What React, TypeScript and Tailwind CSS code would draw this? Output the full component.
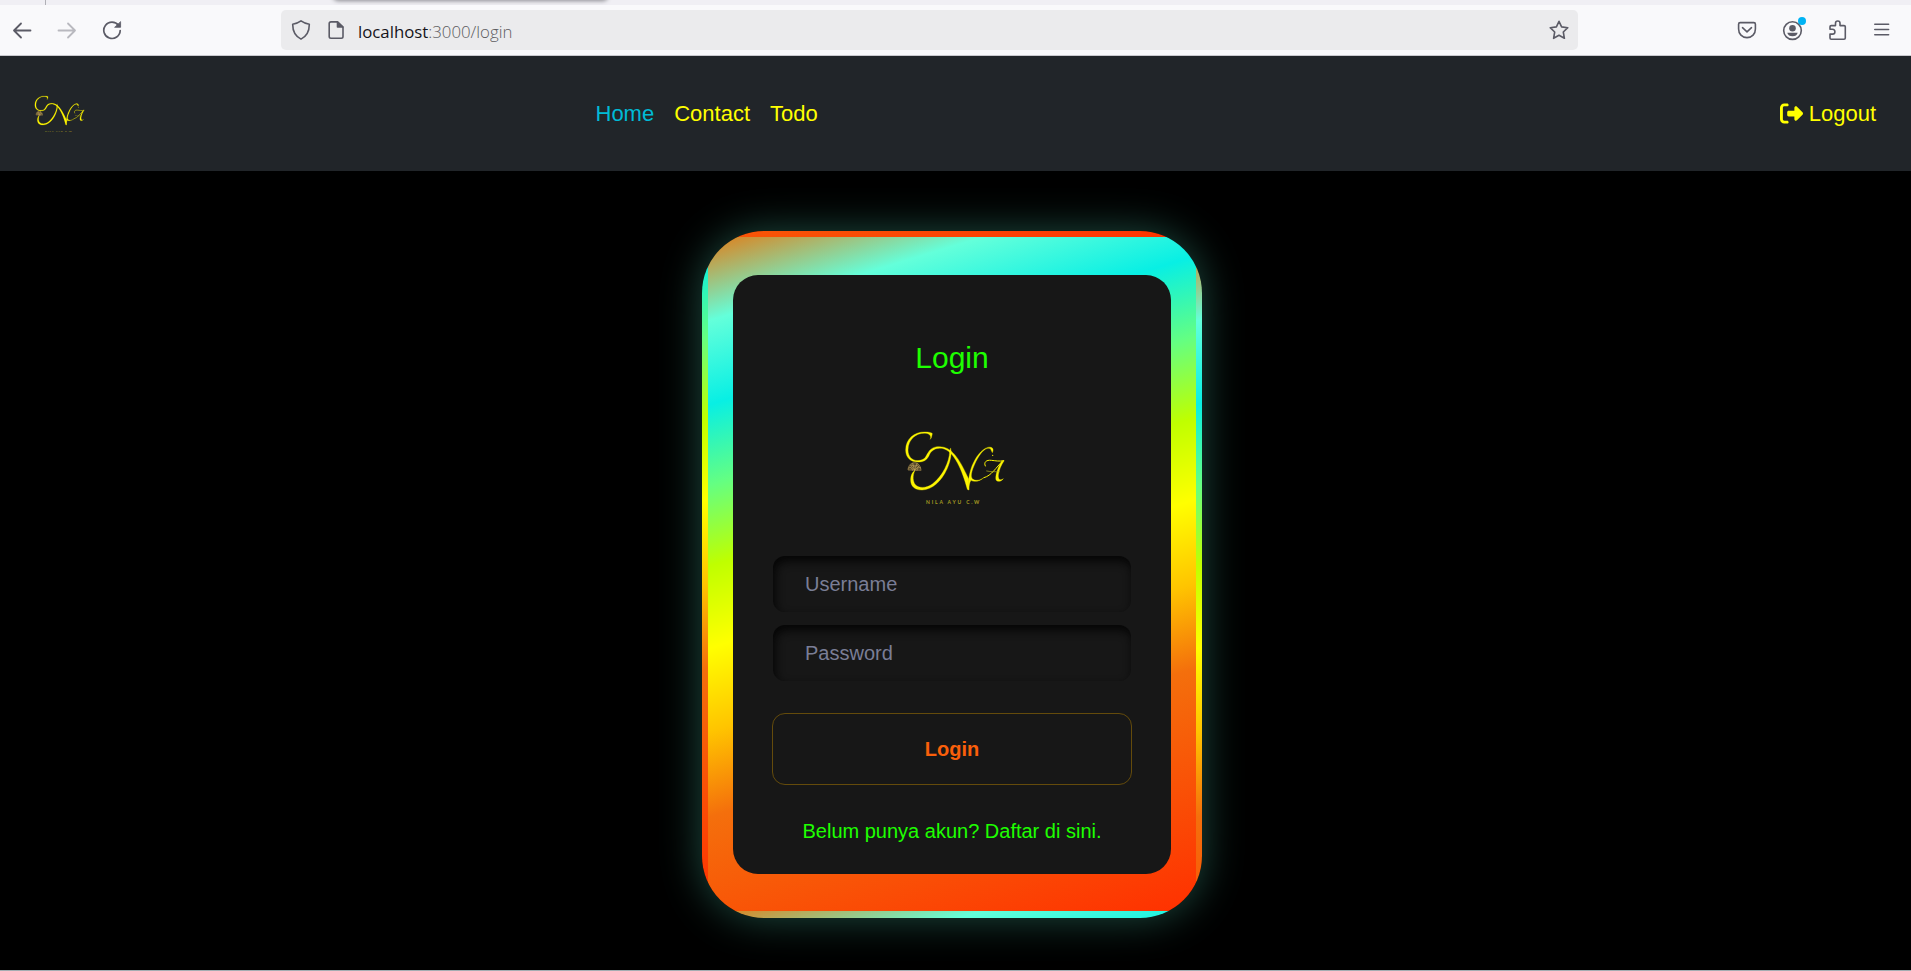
import React from "react";
import { FaRightFromBracket } from "react-icons/fa6";

const icon = {
  fill: "none",
  stroke: "currentColor",
  strokeWidth: 1.6,
  strokeLinecap: "round" as const,
  strokeLinejoin: "round" as const,
};

function Monogram({ className }: { className: string }) {
  return (
    <svg viewBox="0 0 432 330" className={className} fill="none" stroke="#fdf500" strokeLinecap="round" strokeLinejoin="round">
      <g fill="#fdf500" stroke="#fdf500" strokeWidth="1">
        <path d="M151 87C154 80 151 74 144 71C118 64 84 82 84 120C84 144 102 155 120 151C136 148 136 141 143 130C150 116 163 109 179 110C214 111 236 141 266 207L267 240L262 238C247 183 223 122 186 115C166 112 152 123 147 137C140 151 130 156 114 156C91 156 77 142 77 120C77 86 104 65 135 66C146 66 156 68 157 71L154 83Z" />
        <path d="M212 115C216 128 212 153 201 177C184 214 157 239 126 240C104 240 92 229 92 210C92 195 98 186 105 181C97 197 98 216 107 225C117 235 139 235 157 222C188 199 208 155 209 126Z" />
        <path d="M264 237C265 200 271 174 285 149C299 124 319 108 333 112C340 114 341 121 337 128C333 122 334 116 327 115C313 112 295 138 284 163C276 181 269 201 279 208C288 214 302 210 311 203C301 214 282 217 273 211C268 217 267 231 266 239Z" />
        <path d="M372 153C364 165 357 179 355 195C354 209 360 213 370 206C363 216 352 216 348 210C345 199 352 175 365 154Z" />
      </g>
      <path d="M316 168C310 157 319 149 334 151C345 152 358 155 371 152M366 155C349 171 335 197 312 203" strokeWidth="3" />
      <path d="M320 183C333 186 347 185 358 185" strokeWidth="2" stroke="#b7b020" />
      <circle cx="338" cy="136" r="2" fill="#fdf500" stroke="none" />
      <path d="M84 180C85 166 93 158 104 158C115 158 122 168 123 181Z" fill="#54482c" stroke="#a58a4c" strokeWidth="2" strokeDasharray="4 2" />
      <path d="M104 181L91 165M104 181L98 160M104 181L111 160M104 181L118 167M86 174Q94 169 98 181M111 181Q114 169 122 174M94 165Q104 171 114 165" stroke="#c5a85f" strokeWidth="2" strokeDasharray="3 2" />
      <text x="138" y="281" textLength="160" fontFamily="Lato, sans-serif" fontSize="15" fontWeight="700" fill="#a69d22" stroke="none">
        NILA AYU C.W
      </text>
    </svg>
  );
}

function BrowserBar() {
  return (
    <header className="flex h-14 flex-col border-b border-[#c9c9ce] bg-[#f9f9fb] text-[#5b5b66]">
      <div className="flex h-[5px] shrink-0 overflow-hidden bg-[#f0eff4]">
        <div className="h-[5px] w-[46px] shrink-0 border-r border-[#b0b0b6]" />
        <div className="ml-[288px] -mt-2 h-2 w-[273px] rounded-b bg-white shadow-[0_0_4px_1px_#8c8c91]" />
      </div>
      <div className="flex h-[50px] items-center">
        <svg className="ml-3 size-5 shrink-0" viewBox="0 0 20 20" {...icon} strokeWidth={1.8}>
          <path d="M18.5 10.5H2M9 3.5L2 10.5L9 17.5" />
        </svg>
        <svg className="ml-[25px] size-5 shrink-0 text-[#b9b9bf]" viewBox="0 0 20 20" {...icon} strokeWidth={1.8}>
          <path d="M1.5 10.5H18M11 3.5L18 10.5L11 17.5" />
        </svg>
        <svg className="ml-[25px] size-5 shrink-0" viewBox="0 0 20 20" {...icon} strokeWidth={1.7}>
          <path d="M16.6 5.4A8.2 8.2 0 1 0 18.2 10.5" />
          <path d="M18.6 2V7.3H13Z" fill="currentColor" strokeWidth=".8" />
        </svg>
        <div className="ml-[159px] flex h-10 w-[1297px] shrink-0 items-center rounded-[5px] bg-[#ebebed]">
          <svg className="ml-2.5 size-5 shrink-0" viewBox="0 0 20 20" {...icon}>
            <path d="M10 .9C12.2 2.5 15.4 3.8 18.3 4.2C18.4 11.5 16 16.2 10 19.1C4 16.2 1.6 11.5 1.7 4.2C4.6 3.8 7.8 2.5 10 .9Z" />
          </svg>
          <svg className="ml-[15px] size-5 shrink-0" viewBox="0 0 20 20" {...icon}>
            <path d="M5 1.9H11.5L17 7.2V16.5Q17 18.2 15.3 18.2H5Q3.2 18.2 3.2 16.5V3.6Q3.2 1.9 5 1.9Z" />
            <path d="M11.5 2V7H16.8Z" fill="currentColor" />
          </svg>
          <p className="ml-3 mt-[3px] w-[156px] whitespace-nowrap font-['Open_Sans',sans-serif] text-[16.8px] font-light leading-6 text-[#5c5c60]">
            <span className="font-normal text-[#15141a]">localhost</span>:3000/login
          </p>
          <svg className="ml-auto mr-[9px] size-5 shrink-0" viewBox="0 0 20 20" {...icon}>
            <path d="M10 1.3L12.6 6.9L18.8 7.7L14.3 12L15.4 18.3L10 15.3L4.6 18.3L5.7 12L1.2 7.7L7.4 6.9Z" />
          </svg>
        </div>
        <svg className="ml-[159px] size-5 shrink-0" viewBox="0 0 20 20" {...icon}>
          <path d="M3.2 2.6H16.8Q18.4 2.6 18.4 4.2V9C18.4 14 15 17.6 10 17.6S1.6 14 1.6 9V4.2Q1.6 2.6 3.2 2.6ZM5.5 7.7L10 11.8L14.5 7.7" />
        </svg>
        <svg className="ml-[25px] h-7 w-[26px] shrink-0" viewBox="0 0 26 28" {...icon}>
          <circle cx="10.5" cy="14.6" r="8.8" />
          <circle cx="10.5" cy="12.2" r="3.3" fill="currentColor" stroke="none" />
          <path d="M5.3 16.8H15.7Q14.8 20.3 10.5 20.3T5.3 16.8Z" fill="currentColor" stroke="none" />
          <circle cx="20" cy="5" r="4" fill="#00b3f4" stroke="none" />
        </svg>
        <svg className="ml-5 size-5 shrink-0" viewBox="0 0 20 20" {...icon}>
          <path d="M2 9.2V6.8Q2 5.6 3.2 5.6H7.5V3.2C7.5 .3 12 .3 12 3.2V5.6H16Q17.3 5.6 17.3 6.8V18Q17.3 19.2 16 19.2H3.2Q2 19.2 2 18V14.1H4.5C7.7 14.1 7.7 9.2 4.5 9.2Z" />
        </svg>
        <svg className="ml-6 size-5 shrink-0" viewBox="0 0 20 20" {...icon}>
          <path d="M2.8 4.3H16.6M2.8 9.5H16.6M2.8 14.7H16.6" />
        </svg>
      </div>
    </header>
  );
}

function Navbar() {
  return (
    <nav className="flex h-[115px] items-center bg-[#212529] text-[22px] leading-8 text-[#ffff00]">
      <Monogram className="ml-[21.5px] mt-[-3px] h-[55px] w-[72px]" />
      <div className="ml-[502px] flex gap-5">
        <a className="text-[#00bbd6]">Home</a>
        <a>Contact</a>
        <a>Todo</a>
      </div>
      <a className="ml-auto mr-[35px] flex items-center gap-[5.5px]">
        <FaRightFromBracket className="size-[23px]" />
        Logout
      </a>
    </nav>
  );
}

function Field({ label, type }: { label: string; type: string }) {
  return (
    <input
      type={type}
      placeholder={label}
      className="block h-14 w-[358px] rounded-xl bg-[#171717] px-8 text-[20px] text-white shadow-[inset_2px_5px_10px_rgb(5,5,5)] outline-none placeholder:text-[#7a7e96]"
    />
  );
}

function LoginCard() {
  return (
    <div className="mt-[60px] ml-[-7px] h-[687px] w-[500px] rounded-[62px] border-6 border-b-7 border-transparent bg-[linear-gradient(163deg,#e27d18_0%,#64ffda_10.2%,#08efe4_20.4%,#64ff82_30.2%,#bfff00_40%,#ffff00_50%,#ffc400_60.2%,#f46f0c_70.5%,#ff3000_100%)] px-[25px] pt-[38px] shadow-[0_0_42px_rgba(100,255,218,0.3)]">
      <form className="flex h-[599px] flex-col items-center rounded-[25px] bg-[#171717]">
        <h1 className="mt-[63px] text-[30px] leading-10 text-[#1eff00]">Login</h1>
        <Monogram className="mt-8 h-[110px] w-36" />
        <div className="mt-9 flex flex-col gap-[13px]">
          <Field label="Username" type="text" />
          <Field label="Password" type="password" />
        </div>
        <button type="button" className="mt-8 h-18 w-[360px] rounded-[13px] border border-[#644b0b] text-[20px] font-bold text-[#fa5f0a]">
          Login
        </button>
        <a className="mt-[31px] text-[20px] leading-[30px] text-[#1eff00]">Belum punya akun? Daftar di sini.</a>
      </form>
    </div>
  );
}

export default function App() {
  return (
    <div className="flex h-[971px] w-[1911px] flex-col overflow-hidden bg-black font-['Liberation_Sans',Arial,sans-serif]">
      <BrowserBar />
      <Navbar />
      <main className="flex flex-1 items-start justify-center overflow-hidden border-b border-[#a3adb2]">
        <LoginCard />
      </main>
    </div>
  );
}
